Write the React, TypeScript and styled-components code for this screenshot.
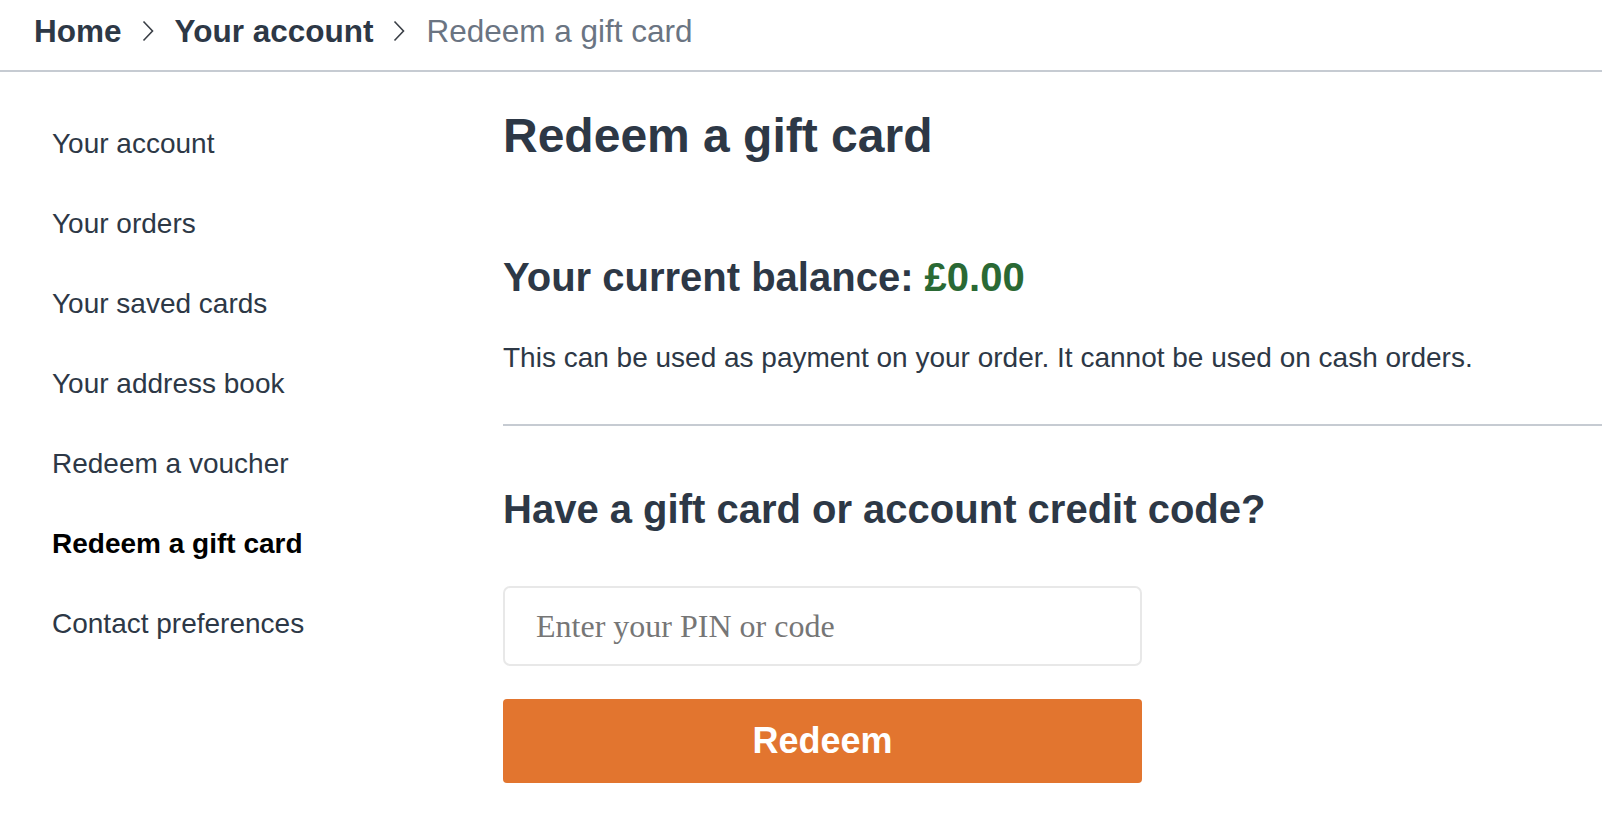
import React from "react";
import styled, { createGlobalStyle } from "styled-components";

const GlobalStyle = createGlobalStyle`
  html, body {
    margin: 0;
    padding: 0;
    background: #ffffff;
  }
  body {
    font-family: "Liberation Sans", Arial, Helvetica, sans-serif;
    color: #2d3846;
  }
  * { box-sizing: border-box; }
`;

const Page = styled.div`
  width: 1602px;
  min-height: 820px;
  display: flex;
  flex-direction: column;
`;

const BreadcrumbBar = styled.nav`
  height: 72px;
  display: flex;
  align-items: center;
  padding: 0 0 9px 34px;
  border-bottom: 2px solid #c6cbd2;
`;

const Crumb = styled.a<{ $current?: boolean }>`
  font-size: 31.5px;
  line-height: 36px;
  font-weight: ${(p) => (p.$current ? 400 : 700)};
  color: ${(p) => (p.$current ? "#6a7482" : "#2d3846")};
  text-decoration: none;
`;

const Chevron = styled.svg`
  width: 12px;
  height: 22px;
  margin: 0 21px 0 20px;
  flex: none;
`;

const Body = styled.div`
  display: flex;
  align-items: flex-start;
`;

const Sidebar = styled.ul`
  list-style: none;
  margin: 0;
  padding: 32px 0 0 52px;
  width: 503px;
  flex: none;
`;

const SideItem = styled.li<{ $active?: boolean }>`
  height: 80px;
  display: flex;
  align-items: center;
  font-size: 28px;
  font-weight: ${(p) => (p.$active ? 700 : 400)};
  color: ${(p) => (p.$active ? "#000000" : "#2d3846")};
`;

const Main = styled.main`
  flex: 1;
  display: flex;
  flex-direction: column;
  padding-top: 36px;
`;

const Title = styled.h1`
  margin: 0;
  font-size: 48px;
  line-height: 56px;
  font-weight: 700;
  color: #2d3846;
`;

const Balance = styled.h2`
  margin: 89px 0 0;
  font-size: 40px;
  line-height: 48px;
  font-weight: 700;
  color: #2d3846;
`;

const Amount = styled.span`
  color: #2a6934;
`;

const Note = styled.p`
  margin: 40px 0 0;
  font-size: 28px;
  line-height: 34px;
  color: #2d3846;
`;

const Divider = styled.hr`
  margin: 49px 0 0;
  border: none;
  height: 2px;
  background: #c6cbd2;
`;

const SubTitle = styled.h2`
  margin: 59px 0 0;
  font-size: 40px;
  line-height: 48px;
  font-weight: 700;
  color: #2d3846;
`;

const Form = styled.form`
  margin-top: 53px;
  width: 639px;
  display: flex;
  flex-direction: column;
  gap: 33px;
`;

const CodeInput = styled.input`
  height: 80px;
  width: 100%;
  border: 2px solid #e8e8e8;
  border-radius: 7px;
  padding: 0 31px;
  font-family: "Liberation Serif", "Times New Roman", serif;
  font-size: 32px;
  color: #2d3846;
  outline: none;
  &::placeholder {
    color: #767676;
  }
`;

const RedeemButton = styled.button`
  height: 84px;
  width: 100%;
  border: none;
  border-radius: 4px;
  background: #e2752f;
  color: #ffffff;
  font-family: "Liberation Sans", Arial, sans-serif;
  font-size: 36px;
  font-weight: 700;
  cursor: pointer;
`;

const ChevronIcon = () => (
  <Chevron viewBox="0 0 12 22" fill="none">
    <path d="M1.5 1.5 L10.5 11 L1.5 20.5" stroke="#3a3f46" strokeWidth="1.6" />
  </Chevron>
);

const navItems = [
  "Your account",
  "Your orders",
  "Your saved cards",
  "Your address book",
  "Redeem a voucher",
  "Redeem a gift card",
  "Contact preferences",
];

export default function App() {
  return (
    <Page>
      <GlobalStyle />
      <BreadcrumbBar>
        <Crumb href="#">Home</Crumb>
        <ChevronIcon />
        <Crumb href="#">Your account</Crumb>
        <ChevronIcon />
        <Crumb $current>Redeem a gift card</Crumb>
      </BreadcrumbBar>
      <Body>
        <Sidebar>
          {navItems.map((item) => (
            <SideItem key={item} $active={item === "Redeem a gift card"}>
              {item}
            </SideItem>
          ))}
        </Sidebar>
        <Main>
          <Title>Redeem a gift card</Title>
          <Balance>
            Your current balance: <Amount>£0.00</Amount>
          </Balance>
          <Note>
            This can be used as payment on your order. It cannot be used on cash orders.
          </Note>
          <Divider />
          <SubTitle>Have a gift card or account credit code?</SubTitle>
          <Form onSubmit={(e) => e.preventDefault()}>
            <CodeInput type="text" placeholder="Enter your PIN or code" />
            <RedeemButton type="submit">Redeem</RedeemButton>
          </Form>
        </Main>
      </Body>
    </Page>
  );
}
